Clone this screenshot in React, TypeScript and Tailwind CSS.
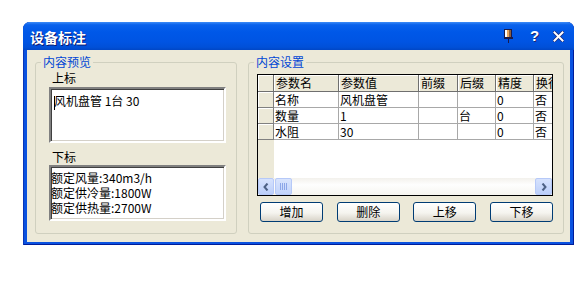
import React from "react";

const headers = ["参数名", "参数值", "前缀", "后缀", "精度", "换行"];
const widths = [65, 80, 39, 38, 38, 40];
const rows = [
  ["名称", "风机盘管", "", "", "0", "否"],
  ["数量", "1", "", "台", "0", "否"],
  ["水阻", "30", "", "", "0", "否"],
];

function Pin() {
  return (
    <svg width="9" height="14" viewBox="0 0 9 14" shapeRendering="crispEdges">
      <rect x="0.5" y="0.5" width="7" height="8" fill="#fff" stroke="#1a1a4a" />
      <rect x="3" y="1" width="2" height="7" fill="#e8a860" />
      <rect x="5" y="1" width="2" height="7" fill="#8a6040" />
      <rect x="0" y="8" width="9" height="2" fill="#1a1a4a" />
      <rect x="4" y="10" width="1" height="4" fill="#1a1a4a" />
    </svg>
  );
}

function CloseX() {
  return (
    <svg width="11" height="11" viewBox="0 0 11 11">
      <path d="M1.5 1.5 L9.5 9.5 M9.5 1.5 L1.5 9.5" stroke="#1a2a7a" strokeWidth="3.4" strokeLinecap="square" />
      <path d="M1.5 1.5 L9.5 9.5 M9.5 1.5 L1.5 9.5" stroke="#ffffff" strokeWidth="2" strokeLinecap="square" />
    </svg>
  );
}

function Arrow({ dir }: { dir: "l" | "r" }) {
  return (
    <svg width="6" height="8" viewBox="0 0 6 8">
      {dir === "l" ? (
        <path d="M4.5 0.5 L1.5 4 L4.5 7.5" fill="none" stroke="#4d6185" strokeWidth="2" />
      ) : (
        <path d="M1.5 0.5 L4.5 4 L1.5 7.5" fill="none" stroke="#4d6185" strokeWidth="2" />
      )}
    </svg>
  );
}

export default function App() {
  return (
    <div className="w-[586px] h-[288px] bg-white pt-[22px] pl-[23px] font-['Noto_Sans_CJK_SC',sans-serif] text-black">
      <div className="w-[551px] h-[223px] rounded-t-[7px] bg-[#0a52e0] flex flex-col shadow-[inset_1px_0_0_#0836b8,inset_-1px_0_0_#001c9a,inset_0_-1px_0_#001c9a]">
        {/* Title bar */}
        <div className="h-[28px] rounded-t-[7px] flex items-center pl-[7px] pr-[10px] bg-[linear-gradient(to_bottom,#3d8cf7_0%,#0a62ec_10%,#0058e8_35%,#0054e3_70%,#0050d8_90%,#0046c6_100%)]">
          <span className="text-white text-[14px] font-bold leading-[16px] [text-shadow:1px_1px_0_#0a1a70] pt-[1px]">设备标注</span>
          <div className="ml-auto flex items-center">
            <Pin />
            <span className="ml-[17px] w-[8px] text-white font-['Liberation_Sans',sans-serif] font-bold text-[15px] leading-[16px] [text-shadow:1px_1px_0_#1a2a7a]">?</span>
            <span className="ml-[15px] flex items-center">
              <CloseX />
            </span>
          </div>
        </div>
        {/* Body */}
        <div className="mx-[4px] h-[192px] bg-[#ece9d8] flex pt-[4px] pl-[8px] pr-[6px] pb-[8px] gap-[11px]">
          {/* Left group */}
          <fieldset className="w-[202px] h-[180px] border border-[#d0d0bf] rounded-[3px] pl-[5px] pr-[10px] pb-[12px] pt-0 m-0 min-w-0">
            <legend className="px-[2px] text-[12px] leading-[16px] text-[#0046d5]">内容预览</legend>
            <div className="pl-[8px] flex flex-col">
              <div className="pl-[3px] text-[12px] leading-[16px]">上标</div>
              <div className="mt-[1px] h-[56px] bg-white border-2 border-t-[#808080] border-l-[#808080] border-b-white border-r-white shadow-[inset_1px_1px_0_#404040,inset_-1px_-1px_0_#d4d0c8] pl-[3px] pt-[4px] text-[12px] leading-[16px] whitespace-pre">
                <span className="inline-block w-px h-[14px] bg-black align-middle -mr-px"></span>
                风机盘管 1台 30
              </div>
              <div className="mt-[6px] pl-[3px] text-[12px] leading-[16px]">下标</div>
              <div className="h-[56px] bg-white border-2 border-t-[#808080] border-l-[#808080] border-b-white border-r-white shadow-[inset_1px_1px_0_#404040,inset_-1px_-1px_0_#d4d0c8] pl-0 pt-[3px] text-[12px] leading-[15px]">
                <div>额定风量:340m3/h</div>
                <div>额定供冷量:1800W</div>
                <div>额定供热量:2700W</div>
              </div>
            </div>
          </fieldset>
          {/* Right group */}
          <fieldset className="w-[316px] h-[180px] border border-[#d0d0bf] rounded-[3px] pl-[5px] pr-[10px] pb-[12px] pt-0 m-0 min-w-0">
            <legend className="px-[2px] text-[12px] leading-[16px] text-[#0046d5]">内容设置</legend>
            <div className="pl-[3px] flex flex-col">
              <div className="mt-[4px] w-[296px] h-[122px] border border-black bg-white flex flex-col overflow-hidden">
                {/* header */}
                <div className="flex h-[17px] shrink-0">
                  <div className="w-[16px] shrink-0 bg-[#ece9d8] border-r border-b border-[#6f6f6f] shadow-[inset_1px_1px_0_#ffffff]"></div>
                  {headers.map((h, i) => (
                    <div
                      key={h}
                      style={{ width: widths[i] }}
                      className="shrink-0 bg-[#ece9d8] border-r border-b border-[#6f6f6f] shadow-[inset_1px_1px_0_#ffffff] pl-[2px] text-[12px] leading-[16px] whitespace-nowrap overflow-hidden"
                    >
                      {h}
                    </div>
                  ))}
                </div>
                {rows.map((r, ri) => (
                  <div key={ri} className="flex h-[16px] shrink-0">
                    <div className="w-[16px] shrink-0 bg-[#ece9d8] border-r border-b border-[#808080] shadow-[inset_1px_1px_0_#ffffff]"></div>
                    {r.map((c, ci) => (
                      <div
                        key={ci}
                        style={{ width: widths[ci] }}
                        className="shrink-0 border-r border-b border-[#a8a8a8] pl-[1px] text-[12px] leading-[15px] whitespace-nowrap overflow-hidden"
                      >
                        {c}
                      </div>
                    ))}
                  </div>
                ))}
                <div className="flex flex-1">
                  <div className="w-[16px] bg-[#ece9d8]"></div>
                  <div className="flex-1 bg-white"></div>
                </div>
                {/* scrollbar */}
                <div className="h-[17px] shrink-0 flex items-stretch bg-[linear-gradient(to_bottom,#f3f1ec,#fefefe_40%,#f6f5f0)]">
                  <div className="w-[16px] rounded-[2px] border border-[#b6c9f8] bg-[linear-gradient(to_bottom,#d6e2fd,#bccffa)] flex items-center justify-center">
                    <Arrow dir="l" />
                  </div>
                  <div className="ml-[1px] w-[17px] rounded-[2px] border border-[#b6c9f8] bg-[linear-gradient(to_bottom,#d9e4fd,#c2d4fb)] flex items-center justify-center gap-[1px]">
                    <div className="w-px h-[7px] bg-[#8ca6e8]"></div>
                    <div className="w-px h-[7px] bg-[#8ca6e8]"></div>
                    <div className="w-px h-[7px] bg-[#8ca6e8]"></div>
                    <div className="w-px h-[7px] bg-[#8ca6e8]"></div>
                  </div>
                  <div className="flex-1"></div>
                  <div className="w-[17px] rounded-[2px] border border-[#b6c9f8] bg-[linear-gradient(to_bottom,#d6e2fd,#bccffa)] flex items-center justify-center">
                    <Arrow dir="r" />
                  </div>
                </div>
              </div>
              <div className="mt-[6px] pl-[3px] flex justify-between">
                {["增加", "删除", "上移", "下移"].map((b) => (
                  <button
                    key={b}
                    className="w-[63px] h-[20px] rounded-[3px] border border-[#003c74] bg-[linear-gradient(to_bottom,#ffffff,#f5f4ef_55%,#d8d3c8)] text-[12px] leading-[16px] text-black"
                  >
                    {b}
                  </button>
                ))}
              </div>
            </div>
          </fieldset>
        </div>
      </div>
    </div>
  );
}
